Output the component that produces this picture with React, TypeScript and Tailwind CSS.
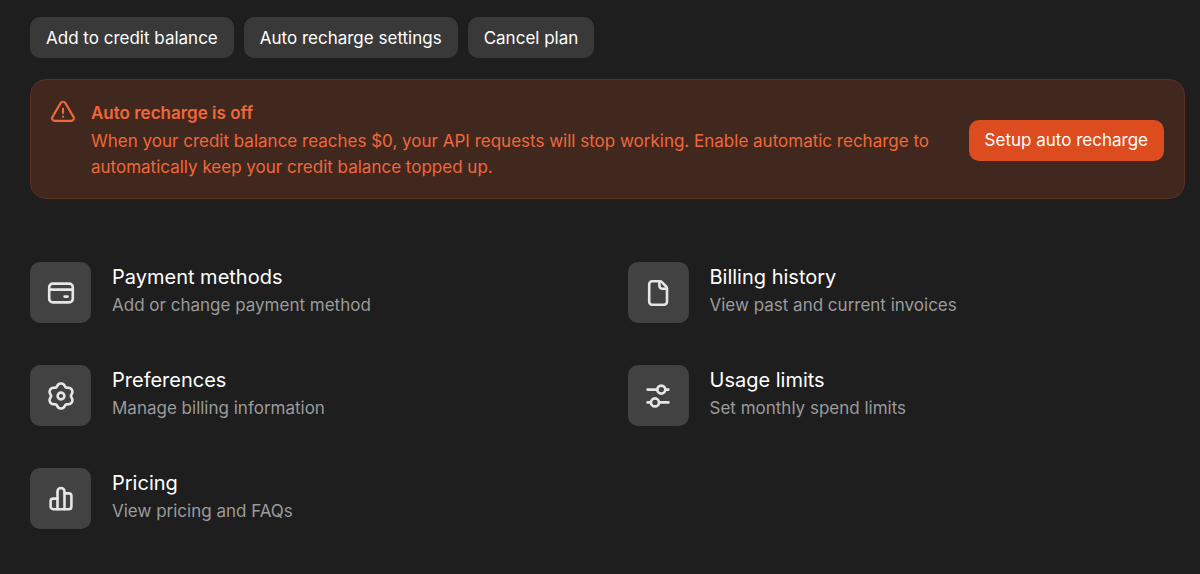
import type { ReactNode } from "react";

function Glyph({ children }: { children: ReactNode }) {
  return (
    <svg
      viewBox="0 0 30 30"
      className="size-[30px]"
      fill="none"
      stroke="currentColor"
      strokeWidth="2.6"
      strokeLinecap="round"
      strokeLinejoin="round"
      aria-hidden="true"
    >
      {children}
    </svg>
  );
}

function gearOutline() {
  const points: string[] = [];
  for (let deg = 0; deg < 360; deg += 4) {
    const a = (deg * Math.PI) / 180;
    const r = 11.4 - 1.3 * Math.cos(6 * a) - 0.2 * Math.cos(12 * a);
    points.push(`${(15 + r * Math.cos(a)).toFixed(2)} ${(15 + r * Math.sin(a)).toFixed(2)}`);
  }
  return `M${points.join("L")}Z`;
}

const links = [
  {
    title: "Payment methods",
    text: "Add or change payment method",
    href: "#payment-methods",
    icon: (
      <Glyph>
        <rect x="3.2" y="5.6" width="23.6" height="18.8" rx="3.6" />
        <path d="M3.2 11.6h23.6M18.6 18.6h3" />
      </Glyph>
    ),
  },
  {
    title: "Billing history",
    text: "View past and current invoices",
    href: "#billing-history",
    icon: (
      <Glyph>
        <path d="M9.2 3.2h7.6c.8 0 1.5.3 2.1.9l4.2 4.4c.6.6.9 1.3.9 2.1v13.2a3 3 0 0 1-3 3H9.2a3 3 0 0 1-3-3V6.2a3 3 0 0 1 3-3Z" />
        <path d="M16.4 3.4v4.4a3 3 0 0 0 3 3h4.4" />
      </Glyph>
    ),
  },
  {
    title: "Preferences",
    text: "Manage billing information",
    href: "#preferences",
    icon: (
      <Glyph>
        <path d={gearOutline()} />
        <circle cx="15" cy="15" r="3.4" />
      </Glyph>
    ),
  },
  {
    title: "Usage limits",
    text: "Set monthly spend limits",
    href: "#usage-limits",
    icon: (
      <Glyph>
        <path d="M4.6 8.6h9.6M22.4 8.6h3M4.6 21.4h3.2M16 21.4h9.4" />
        <circle cx="18.3" cy="8.6" r="4" />
        <circle cx="12" cy="21.4" r="4" />
      </Glyph>
    ),
  },
  {
    title: "Pricing",
    text: "View pricing and FAQs",
    href: "#pricing",
    icon: (
      <Glyph>
        <path d="M11.5 25.2H7.2a2.6 2.6 0 0 1-2.6-2.6v-5.4a2.6 2.6 0 0 1 2.6-2.6h4.3" />
        <path d="M11.5 25.2V7.5a3.5 3.5 0 0 1 7 0v17.7Z" />
        <path d="M18.5 9.4h4.3a2.6 2.6 0 0 1 2.6 2.6v10.6a2.6 2.6 0 0 1-2.6 2.6h-4.3" />
      </Glyph>
    ),
  },
];

function PlanButton({ children }: { children: ReactNode }) {
  return (
    <button
      type="button"
      className="h-[41px] rounded-[10px] bg-[#393939] px-4 pt-0.5 text-[17px] text-white hover:bg-[#444444]"
    >
      {children}
    </button>
  );
}

export default function App() {
  return (
    <main className="min-h-screen bg-[#1e1e1e] pt-[17px] pr-[15px] pb-10 pl-[30px] font-['Inter','Liberation_Sans',sans-serif]">
      <div className="flex flex-wrap gap-[10px]">
        <PlanButton>Add to credit balance</PlanButton>
        <PlanButton>Auto recharge settings</PlanButton>
        <PlanButton>Cancel plan</PlanButton>
      </div>

      <section className="mt-[21px] flex items-center gap-8 rounded-2xl border border-[#5b3022] bg-[#40281f] px-5 pt-5 pb-[18px] text-[#f0673a]">
        <div className="flex flex-1 gap-4">
          <svg
            viewBox="0 0 24 24"
            className="size-6 shrink-0"
            fill="none"
            stroke="currentColor"
            strokeWidth="2.2"
            strokeLinecap="round"
            strokeLinejoin="round"
            aria-hidden="true"
          >
            <path d="M9.6 3.1a2.8 2.8 0 0 1 4.8 0l8 13.6a2.7 2.7 0 0 1-2.4 4.2H4a2.7 2.7 0 0 1-2.4-4.2Z" />
            <path d="M12 8.8v4.2M12 16.7v.1" />
          </svg>
          <div className="text-[17px] leading-[26px]">
            <h2 className="font-semibold">Auto recharge is off</h2>
            <p className="mt-0.5">
              When your credit balance reaches $0, your API requests will stop working. Enable automatic recharge to
              automatically keep your credit balance topped up.
            </p>
          </div>
        </div>
        <button
          type="button"
          className="h-[41px] shrink-0 rounded-[10px] bg-[#dc4c1e] px-4 pt-0.5 text-[17px] text-white hover:bg-[#e55a2d]"
        >
          Setup auto recharge
        </button>
      </section>

      <nav aria-label="Billing" className="mt-[63px] grid grid-cols-2 gap-x-10 gap-y-[42px]">
        {links.map((link) => (
          <a key={link.title} href={link.href} className="flex gap-[21px]">
            <span className="flex size-[61px] shrink-0 items-center justify-center rounded-[10px] bg-[#424242] text-[#e6e6e6]">
              {link.icon}
            </span>
            <span className="flex flex-col pt-px">
              <span className="text-[20px] leading-[28px] text-white">{link.title}</span>
              <span className="text-[17px] leading-[28px] text-[#9b9b9b]">{link.text}</span>
            </span>
          </a>
        ))}
      </nav>
    </main>
  );
}
